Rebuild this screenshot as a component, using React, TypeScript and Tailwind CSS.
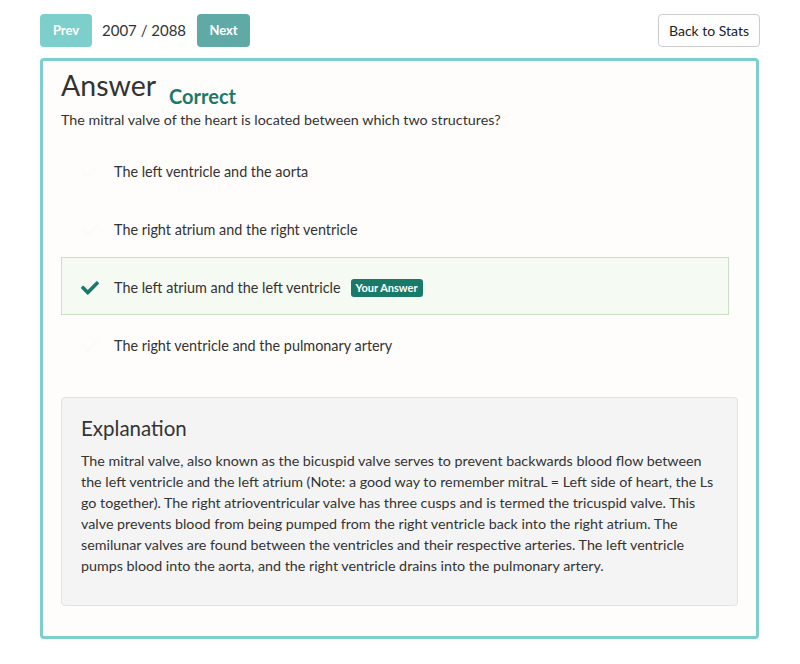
import React from "react";

const Check = ({ className }: { className?: string }) => (
  <svg viewBox="0 0 512 512" className={className} fill="currentColor">
    <path d="M173.898 439.404l-166.4-166.4c-9.997-9.997-9.997-26.206 0-36.204l36.203-36.204c9.997-9.998 26.207-9.998 36.204 0L192 312.69 432.095 72.596c9.997-9.997 26.207-9.997 36.204 0l36.203 36.204c9.997 9.997 9.997 26.206 0 36.204l-294.4 294.401c-9.998 9.997-26.207 9.997-36.204-.001z" />
  </svg>
);

const options = [
  { text: "The left ventricle and the aorta", selected: false },
  { text: "The right atrium and the right ventricle", selected: false },
  { text: "The left atrium and the left ventricle", selected: true },
  { text: "The right ventricle and the pulmonary artery", selected: false },
];

export default function App() {
  return (
    <div
      className="w-[800px] h-[664px] bg-white text-[#333] px-10 pt-[14px]"
      style={{ fontFamily: "Lato, 'Open Sans', sans-serif" }}
    >
      <div className="flex items-center justify-between h-[33px]">
        <div className="flex items-center">
          <button className="h-[33px] w-[52px] rounded bg-[#7dcfcc] text-white text-[13px] font-bold">
            Prev
          </button>
          <span className="ml-[10px] mr-[11px] text-[15px] text-[#333]">2007 / 2088</span>
          <button className="h-[33px] w-[53px] rounded bg-[#5faaa7] text-white text-[13px] font-bold">
            Next
          </button>
        </div>
        <button className="h-[33px] w-[102px] rounded border border-[#cccccc] bg-white text-[14px] text-[#222]">
          Back to Stats
        </button>
      </div>

      <div className="mt-[11px] h-[581px] w-[719px] rounded border-[3px] border-[#7ccfcc] bg-[#fefdfc] pl-[18px] pr-[18px] pt-[7px]">
        <div className="flex items-end h-[34px]">
          <h1 className="text-[28.5px] leading-[34px] text-[#333]">Answer</h1>
          <span className="ml-[13px] text-[20px] font-bold text-[#1a7a6a] leading-[24px] mb-[-6px]">Correct</span>
        </div>
        <p className="mt-[8px] text-[14.3px] leading-[20px] text-[#333]">
          The mitral valve of the heart is located between which two structures?
        </p>

        <div className="mt-[11px] mr-[9px]">
          {options.map((o, i) => (
            <div
              key={i}
              className={
                "flex items-center h-[58px] pl-[17px] pt-[3px] border " +
                (o.selected ? "bg-[#f5faf3] border-[#c9e0c5]" : "border-transparent")
              }
            >
              <Check
                className={
                  "w-[22px] h-[18px] " + (o.selected ? "text-[#1a7a6a]" : "text-[#fcfbfa]")
                }
              />
              <span className="ml-[13px] text-[14.4px] text-[#333]">{o.text}</span>
              {o.selected && (
                <span className="ml-[10px] rounded-[3px] bg-[#1a7a6a] px-[5px] h-[18px] leading-[18px] text-[11px] font-bold text-white">
                  Your Answer
                </span>
              )}
            </div>
          ))}
        </div>

        <div className="mt-[24px] h-[209px] rounded border border-[#e2e2e2] bg-[#f4f4f4] px-[19px] pt-[15px]">
          <h2 className="text-[20.5px] leading-[30px] text-[#333]">Explanation</h2>
          <p className="mt-[7px] text-[14.3px] leading-[21px] text-[#333]">
            The mitral valve, also known as the bicuspid valve serves to prevent backwards blood flow between the left ventricle and the left atrium (Note: a good way to remember mitraL = Left side of heart, the Ls go together). The right atrioventricular valve has three cusps and is termed the tricuspid valve. This valve prevents blood from being pumped from the right ventricle back into the right atrium. The semilunar valves are found between the ventricles and their respective arteries. The left ventricle pumps blood into the aorta, and the right ventricle drains into the pulmonary artery.
          </p>
        </div>
      </div>
    </div>
  );
}
